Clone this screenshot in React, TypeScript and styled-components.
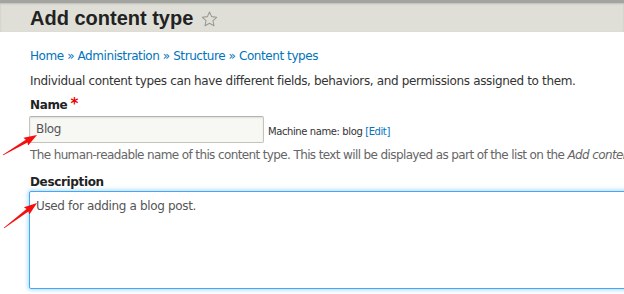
import React from "react";
import styled, { createGlobalStyle } from "styled-components";

const GlobalStyle = createGlobalStyle`
  html, body {
    margin: 0;
    padding: 0;
    background: #fff;
    overflow: hidden;
  }
  body {
    font-family: "DejaVu Sans", "Liberation Sans", sans-serif;
    color: #333;
  }
`;

const Page = styled.div`
  position: relative;
  width: 624px;
  height: 294px;
  overflow: hidden;
`;

const Header = styled.header`
  height: 29px;
  background: #dfdfd8;
  border-top: 3px solid #a3a3a0;
  box-shadow: inset 0 1px 2px rgba(0, 0, 0, 0.15);
  display: flex;
  align-items: center;
  padding-left: 30px;
  gap: 8px;
`;

const Title = styled.h1`
  margin: 0;
  font-family: "Liberation Sans", Arial, sans-serif;
  font-size: 20px;
  font-weight: bold;
  color: #222;
  line-height: 1;
`;

const Content = styled.main`
  padding: 14px 0 0 29px;
  font-size: 12px;
  letter-spacing: -0.35px;
`;

const Breadcrumb = styled.nav`
  margin: 0 0 1px 1px;
  line-height: 20px;
  color: #0074bd;
  letter-spacing: -0.42px;
`;

const Crumb = styled.a`
  color: #0074bd;
  text-decoration: none;
`;

const Intro = styled.p`
  margin: 0 0 0 1px;
  line-height: 20px;
  padding-top: 4px;
`;

const Field = styled.div<{ $top: number }>`
  margin-top: ${(p) => p.$top}px;
`;

const Label = styled.label<{ $gap: number }>`
  display: block;
  margin-left: 1px;
  font-weight: bold;
  line-height: 16px;
  color: #222;
  margin-bottom: ${(p) => p.$gap}px;
`;

const Required = styled.span`
  color: #e00;
  margin-left: 3px;
  font-size: 15px;
  line-height: 12px;
`;

const InputRow = styled.div`
  display: flex;
  align-items: center;
  gap: 4px;
`;

const TextInput = styled.div`
  box-sizing: border-box;
  width: 235px;
  height: 27px;
  border: 1px solid #c4c4bd;
  border-top-color: #b4b4ad;
  background: #f7f7f4;
  box-shadow: inset 0 1px 2px rgba(0, 0, 0, 0.1);
  border-radius: 2px;
  padding: 0 6px;
  line-height: 25px;
  color: #555;
`;

const MachineName = styled.span`
  font-size: 10px;
  letter-spacing: -0.4px;
  color: #333;
  padding-top: 3px;
`;

const EditLink = styled.a`
  color: #0074bd;
  text-decoration: none;
`;

const Help = styled.div`
  margin: 4px 0 0 1px;
  line-height: 16px;
  color: #666;
  white-space: nowrap;
  letter-spacing: -0.62px;
`;

const TextArea = styled.div`
  box-sizing: border-box;
  width: 640px;
  height: 98px;
  border: 1px solid #45a8f5;
  border-radius: 2px;
  box-shadow: 0 0 4px 1px rgba(64, 166, 255, 0.45);
  background: #fff;
  padding: 6px 6px;
  line-height: 16px;
  color: #555;
`;

const Overlay = styled.svg`
  position: absolute;
  left: 0;
  top: 0;
  pointer-events: none;
`;

const Star = styled.svg`
  flex: none;
  margin-top: 2px;
`;

function arrowPoints(x1: number, y1: number, x2: number, y2: number) {
  const dx = x2 - x1;
  const dy = y2 - y1;
  const len = Math.hypot(dx, dy);
  const ux = dx / len;
  const uy = dy / len;
  const nx = -uy;
  const ny = ux;
  const pts: [number, number][] = [
    [0, -0.4],
    [len - 12, -1.6],
    [len - 13, -4.5],
    [len, 0],
    [len - 13, 4.5],
    [len - 12, 1.6],
    [0, 0.4],
  ];
  return pts
    .map(([a, b]) => `${(x1 + ux * a + nx * b).toFixed(1)},${(y1 + uy * a + ny * b).toFixed(1)}`)
    .join(" ");
}

export default function App() {
  return (
    <>
      <GlobalStyle />
      <Page>
        <Header>
          <Title>Add content type</Title>
          <Star width="17" height="16" viewBox="0 0 24 23">
            <path
              d="M12 1.5l3.1 6.6 7.2.9-5.3 5 1.4 7.1L12 17.6l-6.4 3.5 1.4-7.1-5.3-5 7.2-.9z"
              fill="none"
              stroke="#9a9a94"
              strokeWidth="1.5"
              strokeLinejoin="round"
            />
          </Star>
        </Header>
        <Content>
          <Breadcrumb>
            <Crumb href="#">Home</Crumb> » <Crumb href="#">Administration</Crumb> »{" "}
            <Crumb href="#">Structure</Crumb> » <Crumb href="#">Content types</Crumb>
          </Breadcrumb>
          <Intro>Individual content types can have different fields, behaviors, and permissions assigned to them.</Intro>
          <Field $top={6}>
            <Label $gap={3}>
              Name<Required>*</Required>
            </Label>
            <InputRow>
              <TextInput>Blog</TextInput>
              <MachineName>
                Machine name: blog <EditLink href="#">[Edit]</EditLink>
              </MachineName>
            </InputRow>
            <Help>
              The human-readable name of this content type. This text will be displayed as part of the list on the{" "}
              <em>Add content</em> page.
            </Help>
          </Field>
          <Field $top={11}>
            <Label $gap={1}>Description</Label>
            <TextArea>Used for adding a blog post.</TextArea>
          </Field>
        </Content>
        <Overlay width="624" height="294" viewBox="0 0 624 294">
          <polygon points={arrowPoints(3, 155, 37, 135)} fill="#f51010" />
          <polygon points={arrowPoints(4, 228, 37, 203)} fill="#f51010" />
        </Overlay>
      </Page>
    </>
  );
}
